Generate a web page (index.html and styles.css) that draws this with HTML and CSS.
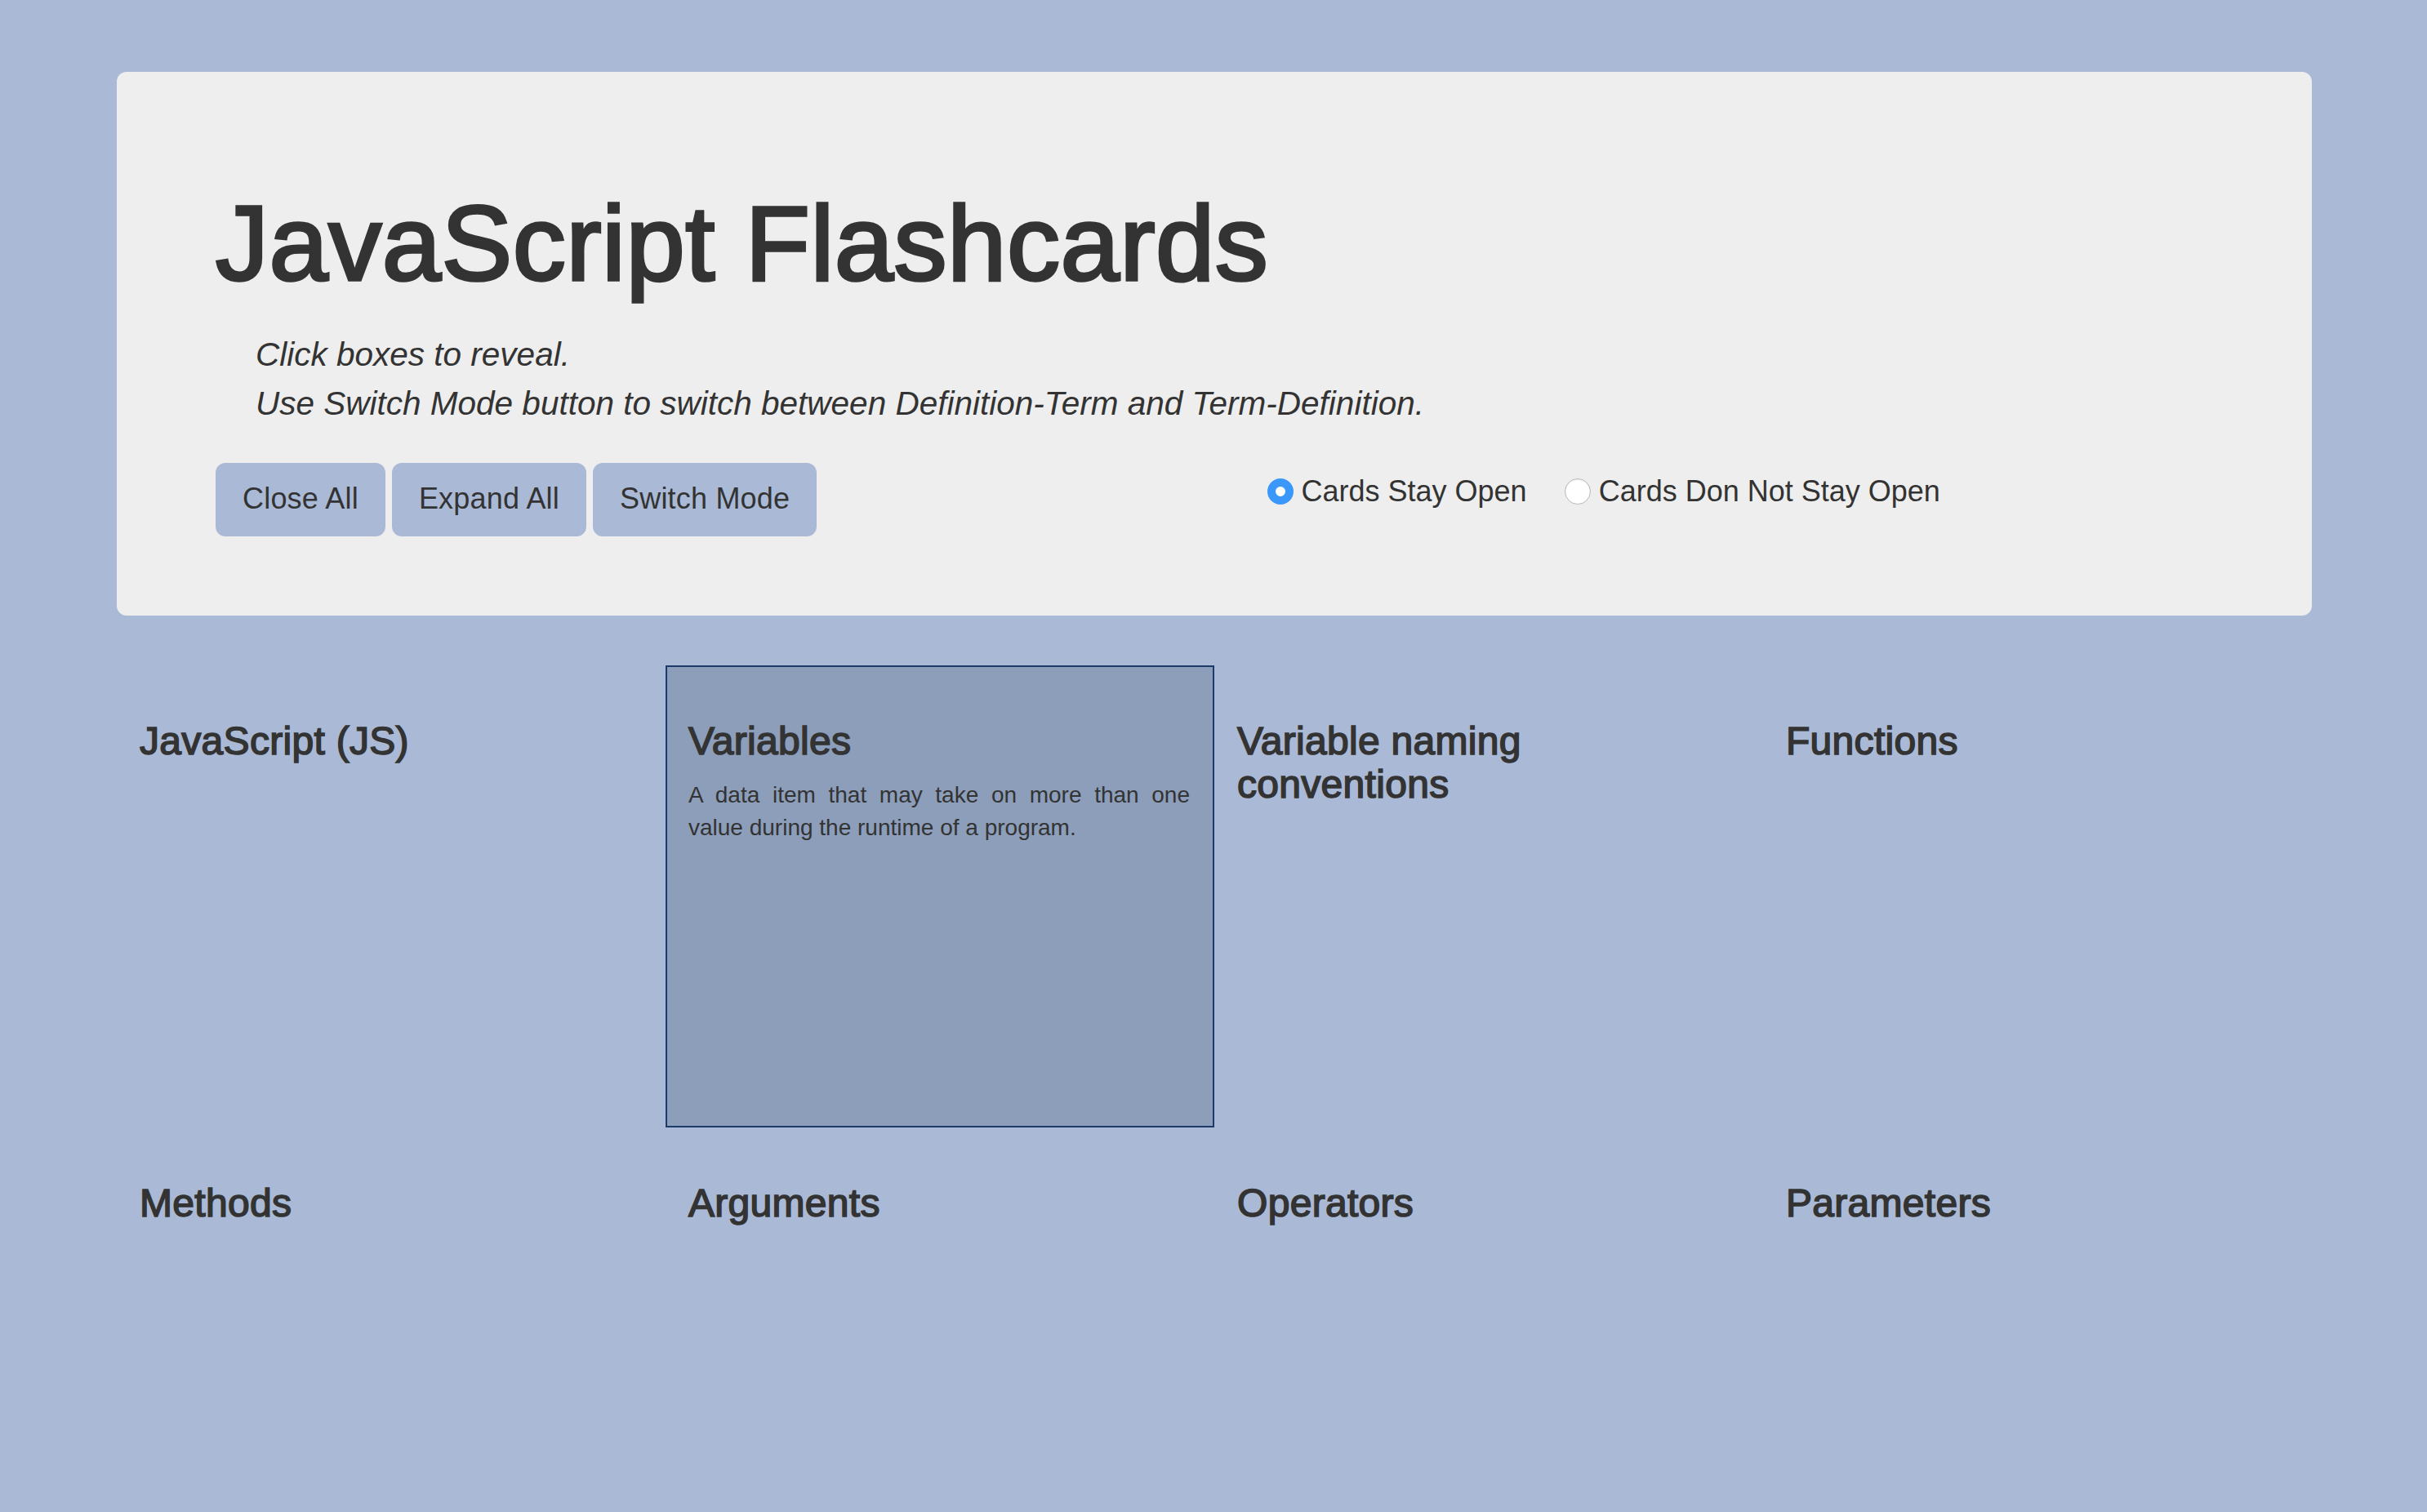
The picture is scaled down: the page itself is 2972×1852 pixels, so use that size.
FILE: index.html
```html
<!DOCTYPE html>
<html lang="en">
<head>
<meta charset="utf-8">
<title>JavaScript Flashcards</title>
<link rel="stylesheet" href="styles.css">
</head>
<body>
<div class="page">
  <header class="jumbotron">
    <h1 class="title">JavaScript Flashcards</h1>
    <p class="hint"><em>Click boxes to reveal.</em><br><em>Use Switch Mode button to switch between Definition-Term and Term-Definition.</em></p>
    <div class="controls">
      <div class="buttons">
        <button class="btn" type="button">Close All</button>
        <button class="btn" type="button">Expand All</button>
        <button class="btn" type="button">Switch Mode</button>
      </div>
      <div class="modes">
        <label class="mode"><input class="radio" type="radio" name="mode" checked> Cards Stay Open</label>
        <label class="mode"><input class="radio" type="radio" name="mode"> Cards Don Not Stay Open</label>
      </div>
    </div>
  </header>

  <main class="cards">
    <div class="card"><h3 class="card-title">JavaScript (JS)</h3></div>
    <div class="card open"><h3 class="card-title">Variables</h3><p class="card-text">A data item that may take on more than one value during the runtime of a program.</p></div>
    <div class="card"><h3 class="card-title">Variable naming conventions</h3></div>
    <div class="card"><h3 class="card-title">Functions</h3></div>
    <div class="card"><h3 class="card-title">Methods</h3></div>
    <div class="card"><h3 class="card-title">Arguments</h3></div>
    <div class="card"><h3 class="card-title">Operators</h3></div>
    <div class="card"><h3 class="card-title">Parameters</h3></div>
  </main>
</div>
</body>
</html>
```
FILE: styles.css
```css
html, body {
  margin: 0;
  padding: 0;
}
html {
  background: #aabad6;
}
body {
  color: #333333;
  font-family: "Liberation Sans", Arial, Helvetica, sans-serif;
}
.page {
  padding: 88px 141px 0 143px;
}
.jumbotron {
  background: #eeeeee;
  border-radius: 12px;
  padding: 99px 120px 97px 121px;
}
.title {
  margin: 40px 0 34px 0;
  font-size: 130px;
  line-height: 143px;
  font-weight: 400;
  letter-spacing: 0.5px;
  -webkit-text-stroke: 3.5px #333333;
}
.hint {
  margin: 0 0 43px 0;
  padding-left: 49px;
  font-size: 40.5px;
  line-height: 60px;
}
.hint em {
  font-style: italic;
}
.controls {
  display: grid;
  grid-template-columns: 1fr 1fr;
  align-items: start;
}
.buttons {
  display: flex;
  gap: 8px;
}
.btn {
  font-family: "Liberation Sans", Arial, Helvetica, sans-serif;
  font-size: 36px;
  line-height: 48px;
  letter-spacing: 0.2px;
  color: #333333;
  background: #aabad6;
  border: 2px solid #aabad6;
  border-radius: 12px;
  padding: 18px 31px 20px 31px;
  cursor: pointer;
}
.modes {
  display: flex;
  align-items: center;
  gap: 46px;
  margin-top: 11px;
  padding-left: 64px;
  font-size: 36px;
  line-height: 48px;
}
.mode {
  display: flex;
  align-items: center;
  gap: 10px;
}
.radio {
  appearance: none;
  -webkit-appearance: none;
  margin: 0;
  width: 32px;
  height: 32px;
  border-radius: 50%;
  background: #ffffff;
  border: 1px solid #b9b9b9;
  box-shadow: inset 0 1px 2px rgba(0,0,0,0.08);
  box-sizing: border-box;
}
.radio:checked {
  border: 10px solid #3a98fb;
  background: #ffffff;
  box-shadow: none;
}
.cards {
  display: grid;
  grid-template-columns: repeat(4, 1fr);
  grid-auto-rows: 566px;
  margin-top: 61px;
}
.card {
  box-sizing: border-box;
  border: 2px solid transparent;
  padding: 24px 28px 24px 26px;
}
.card.open {
  background: #8c9eba;
  border-color: #1e3a69;
}
.card-title {
  margin: 40px 0 20px 0;
  font-size: 48px;
  line-height: 53px;
  font-weight: 400;
  letter-spacing: 0.3px;
  -webkit-text-stroke: 1.6px #333333;
}
.card-text {
  margin: 0;
  font-size: 28px;
  line-height: 40px;
  text-align: justify;
}
```
